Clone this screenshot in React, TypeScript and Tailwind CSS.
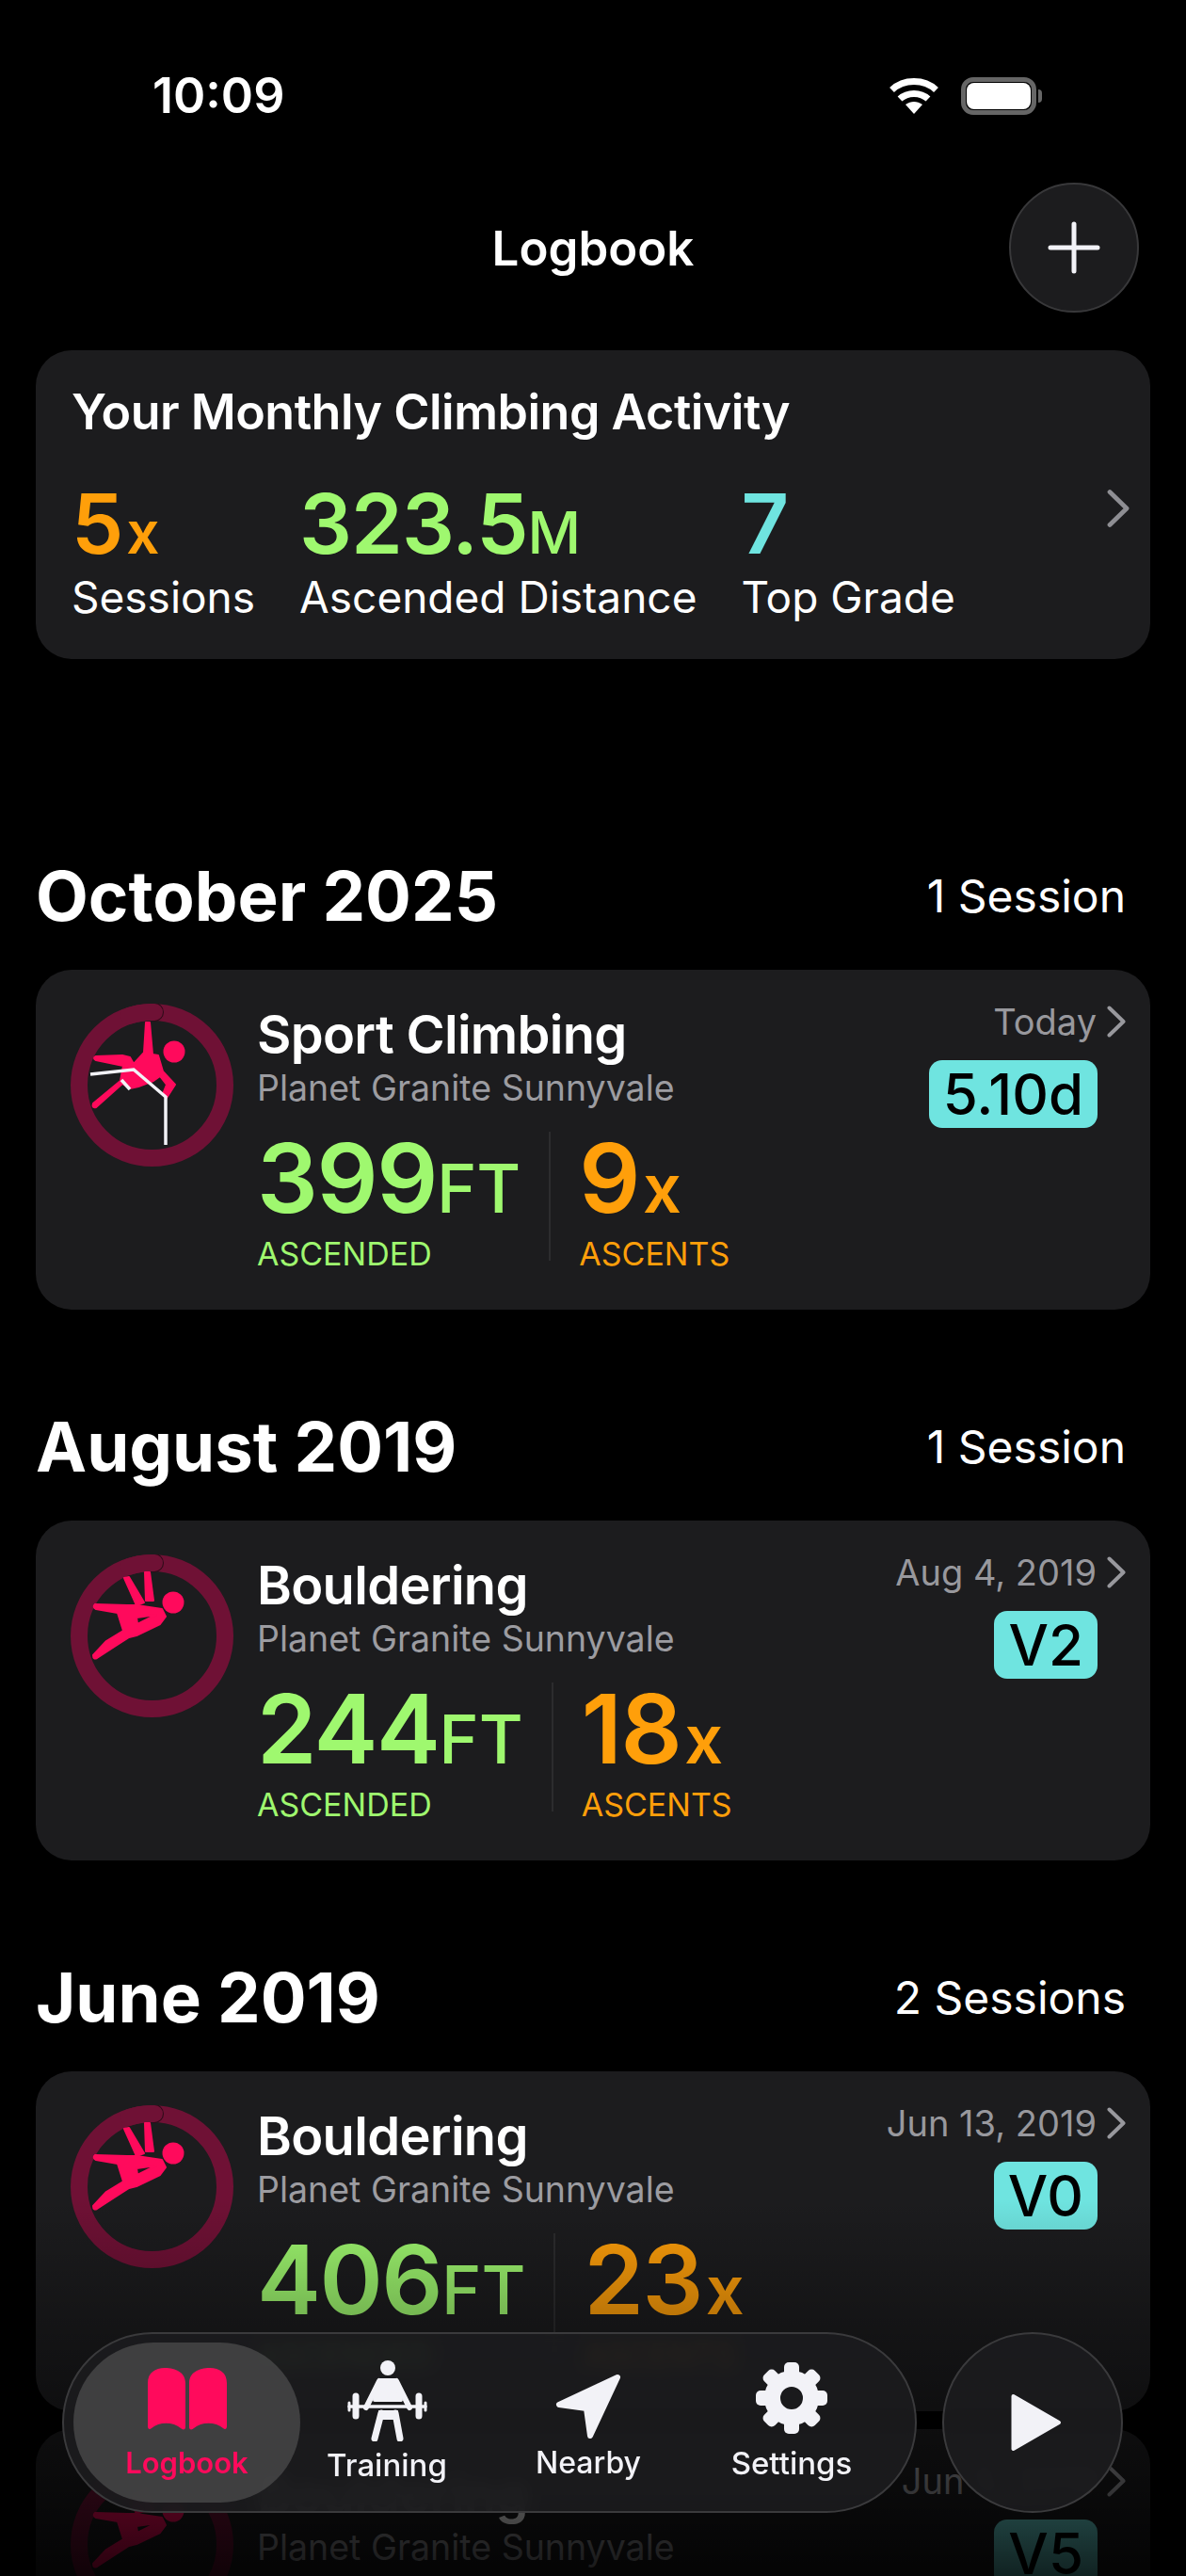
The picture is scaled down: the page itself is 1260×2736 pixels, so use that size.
import type { ReactNode } from 'react';

const GREEN = 'text-[#9ff86f]';
const ORANGE = 'text-[#ff9f0a]';

function Chevron({ className }: { className: string }) {
  return (
    <svg viewBox="0 0 20 34" className={className} fill="none" stroke="currentColor" strokeWidth="4" strokeLinecap="round" strokeLinejoin="round">
      <path d="M2.5 2.5 L17.5 17 L2.5 31.5" />
    </svg>
  );
}

function Ring({ children }: { children: ReactNode }) {
  return (
    <svg viewBox="0 0 173 173" className="h-[173px] w-[173px] shrink-0" fill="none" strokeLinecap="round" strokeLinejoin="round">
      <circle cx="86.5" cy="86.5" r="77.5" stroke="#6f1135" strokeWidth="18" />
      <circle cx="89" cy="9" r="10" fill="#2a0b17" />
      <path d="M62 13 A77.5 77.5 0 0 1 89 9" stroke="#6f1135" strokeWidth="18" />
      {children}
    </svg>
  );
}

function BoulderFigure() {
  return (
    <g fill="#ff0a5c" stroke="#ff0a5c" strokeWidth="2">
      <circle cx="109" cy="51" r="11.5" stroke="none" />
      <path d="M57 25 L62 24 L78 51 L70 54 Z" />
      <path d="M79 19 L84 19 L88 49 L80 49 Z" />
      <path
        fillRule="evenodd"
        d="M26 53 Q23 56 27 58 L50 62 L56 81 L38 92 L24 107 Q24 112 28 110 L48 97 L62 88 L70 86 L95 74 L101 66 L97 58 L70 54 L60 54 Z M70 67 L91 64 L71 74 Z"
      />
    </g>
  );
}

function SportFigure() {
  return (
    <g>
      <circle cx="110" cy="51" r="11.5" fill="#ff0a5c" />
      <path
        d="M80 20 L84 20 L87 54 L93 55 L98 72 L111 86 L102 100 L98 96 L102 86 L95 77 L88 82 L72 88 L63 90 L55 85 L27 110 Q22 111 24 106 L53 82 L56 66 L27 60 Q23 58 27 56 L55 55 L63 57 L67 64 L78 52 Z"
        fill="#ff0a5c"
        stroke="#ff0a5c"
        strokeWidth="2"
      />
      <path d="M21 75 L67 70 L101 99 V150" stroke="#f2f2f7" strokeWidth="3.5" strokeLinecap="butt" strokeLinejoin="miter" />
      <path d="M54 81 L63 91" stroke="#f2f2f7" strokeWidth="3.5" strokeLinecap="butt" />
    </g>
  );
}

type Session = {
  kind: string;
  sport?: boolean;
  date: string;
  grade: string;
  ft: string;
  ascents: string;
};

function SessionCard({ s }: { s: Session }) {
  return (
    <div className="flex h-[361px] shrink-0 rounded-[38px] bg-[#1c1c1e] pl-[37px] pr-[26px] pt-[36px]">
      <Ring>{s.sport ? <SportFigure /> : <BoulderFigure />}</Ring>
      <div className="ml-[25px] flex flex-col">
        <div className="text-[56px] font-semibold leading-[66px] tracking-[-0.7px] text-white">{s.kind}</div>
        <div className="text-[37.5px] leading-[48px] text-[#9c9ca1]">Planet Granite Sunnyvale</div>
        <div className="mt-[19px] flex h-[140px]">
          <div className="flex flex-col pr-[30px]">
            <div className={`flex items-baseline font-semibold leading-[104px] ${GREEN}`}>
              <span className="text-[102px] tracking-[-1.5px]">{s.ft}</span>
              <span className="text-[72px] font-medium">FT</span>
            </div>
            <div className={`-mt-[2px] text-[34px] leading-[40px] ${GREEN}`}>ASCENDED</div>
          </div>
          <div className="mt-[3px] w-[2px] bg-[#2c2c2e]" />
          <div className="flex flex-col pl-[30px]">
            <div className={`flex items-baseline font-semibold leading-[104px] ${ORANGE}`}>
              <span className="text-[102px] tracking-[-1.5px]">{s.ascents}</span>
              <span className="ml-[4px] text-[72px] font-semibold">x</span>
            </div>
            <div className={`-mt-[2px] text-[34px] leading-[40px] ${ORANGE}`}>ASCENTS</div>
          </div>
        </div>
      </div>
      <div className="ml-auto flex flex-col items-end">
        <div className="flex h-[38px] items-center gap-[11px] text-[38px] text-[#98989d]">
          <span>{s.date}</span>
          <Chevron className="h-[34px] w-[20px]" />
        </div>
        <div className="mr-[30px] mt-[22px] flex h-[72px] items-center rounded-[14px] bg-[#6fe4e0] px-[15px] text-[60px] font-medium text-black">
          {s.grade}
        </div>
      </div>
    </div>
  );
}

function SectionHead({ title, count }: { title: string; count: string }) {
  return (
    <div className="flex h-[78px] items-center justify-between pr-[26px]">
      <h2 className="text-[72.5px] font-bold text-white">{title}</h2>
      <span className="text-[48px] text-white">{count}</span>
    </div>
  );
}

function TrainingIcon() {
  return (
    <svg viewBox="0 0 85 86" className="h-[86px] w-[85px]" fill="none" stroke="#f2f2f7" strokeLinecap="round" strokeLinejoin="round">
      <circle cx="43" cy="8" r="8" fill="#f2f2f7" stroke="none" />
      <path d="M35 21 H51 L57 42 H29 Z" fill="#f2f2f7" strokeWidth="4" />
      <path d="M34 22 L20 50 M52 22 L66 50" strokeWidth="6" />
      <path d="M2 49 H83" strokeWidth="3.5" />
      <path d="M9 38 V59 M76 38 V59" strokeWidth="7" />
      <path d="M2 45 V53 M83 45 V53" strokeWidth="3" />
      <path d="M36 56 L29 83 M51 56 L56 83" strokeWidth="7" />
      <path d="M34 54 H53 L50 62 H37 Z" fill="#f2f2f7" strokeWidth="2" />
    </svg>
  );
}

function Gear() {
  const teeth = [0, 45, 90, 135, 180, 225, 270, 315];
  return (
    <svg viewBox="-38 -38 76 76" className="h-[76px] w-[76px]" fill="#f2f2f7">
      {teeth.map((a) => (
        <rect key={a} x="-8" y="-38" width="16" height="16" rx="5" transform={`rotate(${a})`} />
      ))}
      <circle r="20.5" fill="none" stroke="#f2f2f7" strokeWidth="17" />
    </svg>
  );
}

const sessions = {
  oct: { kind: 'Sport Climbing', sport: true, date: 'Today', grade: '5.10d', ft: '399', ascents: '9' },
  aug: { kind: 'Bouldering', date: 'Aug 4, 2019', grade: 'V2', ft: '244', ascents: '18' },
  jun1: { kind: 'Bouldering', date: 'Jun 13, 2019', grade: 'V0', ft: '406', ascents: '23' },
  jun2: { kind: 'Bouldering', date: 'Jun 5, 2019', grade: 'V5', ft: '312', ascents: '15' },
};

export default function App() {
  return (
    <div className="relative h-[2736px] w-[1260px] overflow-hidden bg-black font-['Inter',sans-serif] text-white">
      {/* status bar */}
      <div className="flex h-[204px] items-start justify-between pl-[162px] pr-[153px] pt-[72px]">
        <span className="text-[52px] font-semibold leading-[60px]">10:09</span>
        <div className="flex items-center gap-[24px] pt-[10px]">
          <svg viewBox="0 0 52 40" className="h-[40px] w-[52px]" fill="none" stroke="#fff" strokeWidth="7">
            <path d="M2.5 13.5 C15 1.5 37 1.5 49.5 13.5" />
            <path d="M11 23 C19 15.5 33 15.5 41 23" />
            <path d="M17 29 L26 39 L35 29 C29 25 23 25 17 29 Z" fill="#fff" stroke="none" />
          </svg>
          <div className="flex items-center gap-[2px]">
            <div className="flex h-[40px] w-[80px] rounded-[13px] border-[5px] border-[#666] p-[1px]">
              <div className="flex-1 rounded-[8px] bg-white" />
            </div>
            <div className="h-[14px] w-[4px] rounded-r-full bg-[#666]" />
          </div>
        </div>
      </div>

      {/* header */}
      <div className="-mt-[10px] relative flex h-[178px] items-start justify-center pt-[36px]">
        <h1 className="text-[51px] font-semibold leading-[68px]">Logbook</h1>
        <button className="absolute right-[50px] top-0 flex h-[138px] w-[138px] items-center justify-center rounded-full border-2 border-[#38383a] bg-[#1c1c1e]">
          <svg viewBox="0 0 56 56" className="h-[56px] w-[56px]" stroke="#f2f2f7" strokeWidth="5" strokeLinecap="round">
            <path d="M28 3 V53 M3 28 H53" />
          </svg>
        </button>
      </div>

      <main className="flex flex-col px-[38px]">
        {/* monthly summary */}
        <div className="relative h-[328px] rounded-[38px] bg-[#1c1c1e] pl-[38px] pt-[36px]">
          <div className="text-[52px] font-semibold leading-[60px] tracking-[-0.5px]">Your Monthly Climbing Activity</div>
          <div className="mt-[40px] flex gap-[47px]">
            <div className="flex flex-col">
              <div className={`flex h-[96px] items-baseline font-semibold leading-[96px] ${ORANGE}`}>
                <span className="text-[88px]">5</span>
                <span className="ml-[3px] text-[62px] font-semibold">x</span>
              </div>
              <span className="mt-[3px] text-[46px] leading-[54px]">Sessions</span>
            </div>
            <div className="flex flex-col">
              <div className={`flex h-[96px] items-baseline font-semibold leading-[96px] ${GREEN}`}>
                <span className="text-[88px] tracking-[-1px]">323.5</span>
                <span className="text-[62px] font-medium">M</span>
              </div>
              <span className="mt-[3px] text-[46px] leading-[54px]">Ascended Distance</span>
            </div>
            <div className="flex flex-col">
              <div className="flex h-[96px] items-baseline font-semibold leading-[96px] text-[#6fe4e0]">
                <span className="text-[88px]">7</span>
              </div>
              <span className="mt-[3px] text-[46px] leading-[54px]">Top Grade</span>
            </div>
          </div>
          <Chevron className="absolute right-[22px] top-[147px] h-[42px] w-[24px] text-[#8e8e93]" />
        </div>

        <div className="mt-[213px] flex flex-col">
          <SectionHead title="October 2025" count="1 Session" />
          <div className="mt-[39px]">
            <SessionCard s={sessions.oct} />
          </div>
        </div>
        <div className="mt-[107px] flex flex-col">
          <SectionHead title="August 2019" count="1 Session" />
          <div className="mt-[39px]">
            <SessionCard s={sessions.aug} />
          </div>
        </div>
        <div className="mt-[107px] flex flex-col">
          <SectionHead title="June 2019" count="2 Sessions" />
          <div className="mt-[39px] flex flex-col gap-[19px]">
            <SessionCard s={sessions.jun1} />
            <SessionCard s={sessions.jun2} />
          </div>
        </div>
      </main>

      {/* fade under the tab bar */}
      <div className="absolute inset-x-0 bottom-0 h-[400px] bg-gradient-to-b from-transparent to-black/85" />

      {/* tab bar */}
      <nav className="absolute bottom-[67px] left-[66px] flex h-[192px] w-[908px] items-center rounded-full border-2 border-[#3a3a3c] bg-[#1c1c1e]/90 pl-[10px] backdrop-blur-sm">
        <div className="flex h-[170px] w-[241px] flex-col items-center rounded-[85px] bg-[#48484a]/80 pt-[27px]">
          <svg viewBox="0 0 84 66" className="h-[66px] w-[84px]" fill="#ff0a5c">
            <path d="M0 16 C0 5 8 0 18 0 C30 0 40 5 40 16 V63 C40 66 37 66 35 64 C27 57 12 57 4 64 C2 66 0 65 0 62 Z" />
            <path d="M84 16 C84 5 76 0 66 0 C54 0 44 5 44 16 V63 C44 66 47 66 49 64 C57 57 72 57 80 64 C82 66 84 65 84 62 Z" />
          </svg>
          <span className="mt-[14px] text-[31px] font-semibold leading-[42px] text-[#ff0a5c]">Logbook</span>
        </div>
        <div className="flex w-[184px] flex-col items-center">
          <TrainingIcon />
          <span className="mt-[4px] text-[33px] font-medium leading-[42px] text-[#f2f2f7]">Training</span>
        </div>
        <div className="flex w-[244px] flex-col items-center">
          <svg viewBox="0 0 70 70" className="mb-[4px] mt-[12px] h-[70px] w-[70px]" fill="#f2f2f7" stroke="#f2f2f7" strokeWidth="6" strokeLinejoin="round">
            <path d="M66 4 L4 33 L33 37 L37 66 Z" />
          </svg>
          <span className="text-[32px] font-medium leading-[42px] text-[#f2f2f7]">Nearby</span>
        </div>
        <div className="flex w-[188px] flex-col items-center">
          <div className="mb-[10px]">
            <Gear />
          </div>
          <span className="text-[33px] font-medium leading-[42px] text-[#f2f2f7]">Settings</span>
        </div>
      </nav>

      <button className="absolute bottom-[67px] left-[1001px] flex h-[192px] w-[192px] items-center justify-center rounded-full border-2 border-[#3a3a3c] bg-[#1c1c1e]/90 backdrop-blur-sm">
        <svg viewBox="0 0 54 62" className="ml-[8px] h-[62px] w-[54px]" fill="#f2f2f7" stroke="#f2f2f7" strokeWidth="4" strokeLinejoin="round">
          <path d="M2.5 3 L51 31 L2.5 59 Z" />
        </svg>
      </button>
    </div>
  );
}
